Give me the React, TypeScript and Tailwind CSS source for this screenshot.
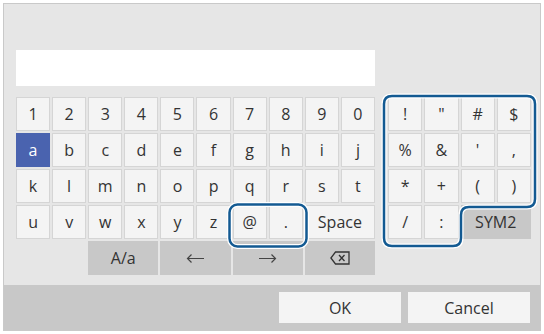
import React from "react";

const rows: string[][] = [
  ["1", "2", "3", "4", "5", "6", "7", "8", "9", "0"],
  ["a", "b", "c", "d", "e", "f", "g", "h", "i", "j"],
  ["k", "l", "m", "n", "o", "p", "q", "r", "s", "t"],
  ["u", "v", "w", "x", "y", "z", "@", "."],
];

const symbols: string[] = ["!", '"', "#", "$", "%", "&", "'", ",", "*", "+", "(", ")", "/", ":"];

function Key({ label, active }: { label: React.ReactNode; active?: boolean }) {
  return (
    <div
      className={`flex items-center justify-center border text-[16px] ${
        active ? "bg-[#4a63af] border-[#4a63af] text-white" : "bg-[#f4f4f4] border-[#d5d5d5] text-[#333]"
      }`}
    >
      {label}
    </div>
  );
}

function DarkKey({ children, className = "" }: { children: React.ReactNode; className?: string }) {
  return (
    <div className={`flex items-center justify-center bg-[#c8c8c8] text-[16px] text-[#333] ${className}`}>
      {children}
    </div>
  );
}

export default function App() {
  return (
    <div className="relative w-[544px] h-[334px] bg-white" style={{ fontFamily: '"Open Sans", "Noto Sans", sans-serif' }}>
      <div className="ml-[3px] mt-[3px] w-[538px] h-[328px] border border-[#c9c9c9] bg-[#e6e6e6] flex flex-col">
        <div className="mt-[46px] ml-[12px] w-[359px] h-[36px] bg-white" />

        <div className="mt-[11px] ml-[12px] flex gap-[13px]">
          {/* letters */}
          <div className="grid grid-cols-10 grid-rows-[repeat(5,34px)] gap-[2px] w-[359px]">
            {rows.map((r) => r.map((k) => <Key key={k} label={k} active={k === "a"} />))}
            <div className="col-span-2 flex items-center justify-center bg-[#f4f4f4] border border-[#d5d5d5] text-[16px] text-[#333]">
              Space
            </div>
            <DarkKey className="col-start-3 col-span-2">A/a</DarkKey>
            <DarkKey className="col-span-2">
              <svg width="19" height="11" viewBox="0 0 19 11" fill="none" stroke="#444" strokeWidth="1.2">
                <path d="M18 5.5H1.5M5.5 1.5L1.5 5.5L5.5 9.5" />
              </svg>
            </DarkKey>
            <DarkKey className="col-span-2">
              <svg width="19" height="11" viewBox="0 0 19 11" fill="none" stroke="#444" strokeWidth="1.2">
                <path d="M1 5.5H17.5M13.5 1.5L17.5 5.5L13.5 9.5" />
              </svg>
            </DarkKey>
            <DarkKey className="col-span-2">
              <svg width="20" height="14" viewBox="0 0 20 14" fill="none" stroke="#333" strokeWidth="1.3">
                <path d="M5.5 1H19V13H5.5L0.9 7Z" />
                <path d="M9 4L14.5 10M14.5 4L9 10" />
              </svg>
            </DarkKey>
          </div>

          {/* symbols */}
          <div className="grid grid-cols-4 grid-rows-[repeat(4,34px)] gap-[2px] w-[143px]">
            {symbols.map((s) => (
              <Key key={s} label={s} />
            ))}
            <DarkKey className="col-span-2">SYM2</DarkKey>
          </div>
        </div>

        <div className="mt-auto h-[45px] bg-[#c8c8c8] flex items-center justify-end gap-[7px] pr-[10px]">
          <button className="w-[122px] h-[31px] bg-[#f4f4f4] text-[16px] text-[#333]">OK</button>
          <button className="w-[122px] h-[31px] bg-[#f4f4f4] text-[16px] text-[#333]">Cancel</button>
        </div>
      </div>

      {/* focus outlines */}
      <svg className="absolute inset-0 pointer-events-none" width="544" height="334">
        <g fill="none" stroke="#ffffff" strokeWidth="5">
          <rect x="229.5" y="201.5" width="77" height="42" rx="8" />
          <path d="M392 93H527Q535 93 535 101V196Q535 204 527 204H469Q461 204 461 212V235Q461 243 453 243H392Q384 243 384 235V101Q384 93 392 93Z" />
        </g>
        <g fill="none" stroke="#135a92" strokeWidth="2.5">
          <rect x="229.5" y="201.5" width="77" height="42" rx="8" />
          <path d="M392 93H527Q535 93 535 101V196Q535 204 527 204H469Q461 204 461 212V235Q461 243 453 243H392Q384 243 384 235V101Q384 93 392 93Z" />
        </g>
      </svg>
    </div>
  );
}
